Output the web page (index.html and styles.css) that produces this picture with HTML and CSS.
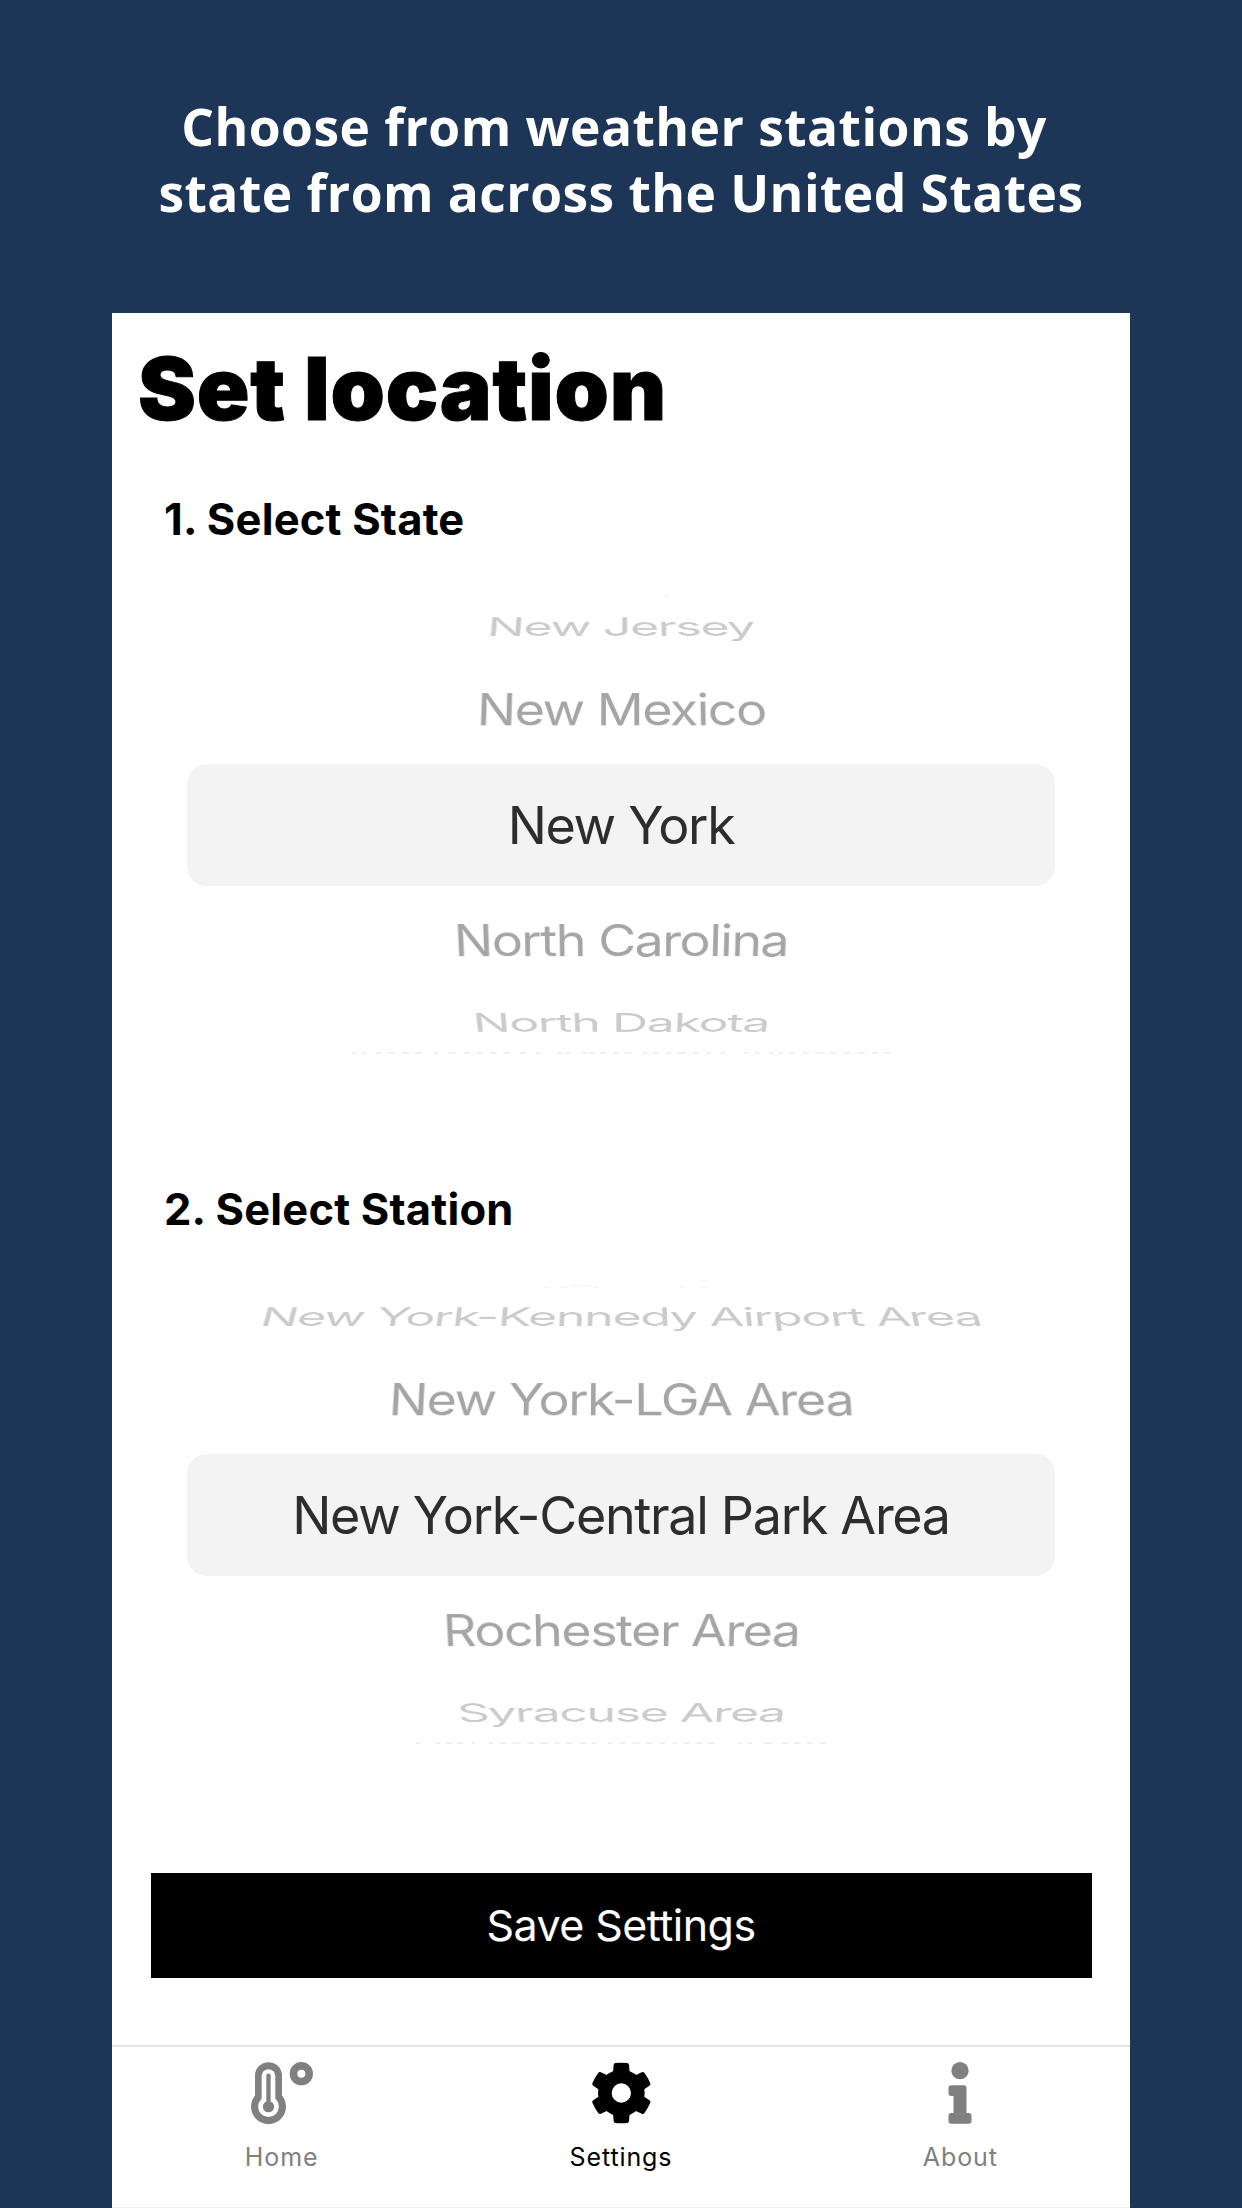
FILE: index.html
```html
<!DOCTYPE html>
<html lang="en">
<head>
<meta charset="utf-8">
<title>Set location</title>
<link rel="stylesheet" href="styles.css">
</head>
<body>
<header class="headline">
  <div class="headline-a">Choose from weather stations by</div>
  <div class="headline-b">state from across the United States</div>
</header>
<main class="screen">
  <h1 class="title">Set location</h1>
  <section class="group">
    <h2 class="label">1. Select State</h2>
    <div class="wheel">
      <svg class="edge" viewBox="0 0 868 4"><path class="faint" d="M478 1h3"/></svg>
      <div class="row far up"><span>New Jersey</span></div>
      <div class="row near up"><span>New Mexico</span></div>
      <div class="row current"><span>New York</span></div>
      <div class="row near down"><span>North Carolina</span></div>
      <div class="row far down"><span>North Dakota</span></div>
      <svg class="edge" viewBox="0 0 868 4"><path class="faint" transform="translate(158 0) scale(.354 1)" d="M20 2h14M47 2h14M88 2h16M122 2h20M160 2h22M198 2h20M251 2h12M292 2h22M336 2h18M372 2h18M410 2h18M448 2h20M493 2h18M538 2h16M600 2h16M624 2h14M671 2h14M690 2h14M720 2h18M758 2h16M790 2h20M842 2h12M869 2h18M907 2h16M941 2h22M982 2h18M1022 2h12M1059 2h16M1126 2h12M1159 2h12M1198 2h12M1226 2h12M1257 2h14M1292 2h18M1329 2h22M1371 2h18M1408 2h18M1447 2h22M1489 2h18M1524 2h18"/></svg>
    </div>
  </section>
  <section class="group">
    <h2 class="label">2. Select Station</h2>
    <div class="wheel">
      <svg class="edge" viewBox="0 0 868 4"><path class="faint top" d="M356 2h6M373 2h7M386 1h7M396 1h8M407 2h5M492 2h5M514 2h6"/></svg>
      <div class="row far up"><span>New York-Kennedy Airport Area</span></div>
      <div class="row near up"><span>New York-LGA Area</span></div>
      <div class="row current"><span>New York-Central Park Area</span></div>
      <div class="row near down"><span>Rochester Area</span></div>
      <div class="row far down"><span>Syracuse Area</span></div>
      <svg class="edge" viewBox="0 0 868 4"><path class="faint" transform="translate(223 0) scale(.333 1)" d="M18 2h14M78 2h12M108 2h18M141 2h20M184 2h12M237 2h12M270 2h20M308 2h24M353 2h20M392 2h22M433 2h16M469 2h20M511 2h20M546 2h14M593 2h16M629 2h18M667 2h24M709 2h20M750 2h16M787 2h16M824 2h16M859 2h20M894 2h22M986 2h12M1013 2h16M1064 2h24M1116 2h18M1152 2h18M1191 2h18M1232 2h18"/></svg>
    </div>
  </section>
  <button class="save">Save Settings</button>
  <nav class="tabs">
    <div class="tab">
      <svg class="icon" viewBox="90 63 192 192">
        <g fill="none" stroke-linecap="round">
          <path stroke="#808080" stroke-width="81" d="M145.500 107V200"/>
          <circle cx="145.500" cy="200" r="52.500" fill="#808080"/>
          <path stroke="#fff" stroke-width="41" d="M145.500 108V200"/>
          <circle cx="145.500" cy="200" r="31" fill="#fff"/>
          <path stroke="#808080" stroke-width="13" d="M145.500 107V200"/>
          <circle cx="145.500" cy="200" r="17" fill="#808080"/>
          <circle cx="244" cy="101" r="23.500" stroke="#808080" stroke-width="23"/>
        </g>
      </svg>
      <span>Home</span>
    </div>
    <div class="tab active">
      <svg class="icon" viewBox="102 63 192 192">
        <defs><path id="tooth" d="M173 110L176 75Q176 70 181 69Q199 67 217 69Q222 70 222 75L225 110Z"/></defs>
        <circle cx="199" cy="159" r="49.500" fill="none" stroke="#000" stroke-width="41"/>
        <use href="#tooth"/>
        <use href="#tooth" transform="rotate(60 199 159)"/>
        <use href="#tooth" transform="rotate(120 199 159)"/>
        <use href="#tooth" transform="rotate(180 199 159)"/>
        <use href="#tooth" transform="rotate(240 199 159)"/>
        <use href="#tooth" transform="rotate(300 199 159)"/>
      </svg>
      <span>Settings</span>
    </div>
    <div class="tab">
      <svg class="icon" viewBox="85.500 63 192 192">
        <g fill="#808080">
          <circle cx="181.500" cy="92" r="26"/>
          <path d="M155 136H193Q201 136 201 144V219H208Q216 219 216 227V243Q216 251 208 251H155Q147 251 147 243V227Q147 219 155 219H162V168H155Q147 168 147 160V144Q147 136 155 136Z"/>
        </g>
      </svg>
      <span>About</span>
    </div>
  </nav>
</main>
</body>
</html>
```
FILE: styles.css
```css
* { box-sizing: border-box; }
body {
  margin: 0;
  height: 2208px;
  overflow: hidden;
  background: #1d3557;
  font-family: Inter, "Liberation Sans", sans-serif;
  display: flex;
  flex-direction: column;
  align-items: center;
}
.headline {
  height: 313px;
  padding-top: 93px;
  color: #fff;
  font: 700 51.5px/66px "Open Sans", "Noto Sans", sans-serif;
  letter-spacing: 0.450px;
  text-align: center;
  white-space: nowrap;
}
.headline-a { padding-right: 14px; }
.screen {
  width: 1018px;
  height: 1895px;
  background: #fff;
  display: flex;
  flex-direction: column;
}
.title {
  margin: 26px 0 0 26px;
  font-size: 87px;
  line-height: 100px;
  font-weight: 900;
  letter-spacing: 0.800px;
  -webkit-text-stroke: 1px #000;
  white-space: nowrap;
}
.group { height: 690px; padding-top: 55px; }
.label {
  margin: 0 0 51px 52px;
  font-size: 43.5px;
  line-height: 50px;
  font-weight: 680;
  letter-spacing: 0.200px;
}
.wheel {
  width: 868px;
  margin: 0 auto;
  font-size: 52px;
  letter-spacing: -1.400px;
}
.edge { display: block; width: 868px; height: 4px; }
.faint { stroke: #f0f0f0; stroke-width: 2; }
.faint.top { stroke: #f7f7f7; }
.row {
  display: flex;
  align-items: center;
  justify-content: center;
  white-space: nowrap;
}
.row span { line-height: 60px; }
.current {
  height: 122px;
  padding-top: 1px;
  border-radius: 20px;
  background: #f3f3f3;
  color: #2d2d2d;
  letter-spacing: -1.300px;
}
.near { height: 109.500px; padding-top: 1px; color: #a5a5a5; letter-spacing: -1.500px; }
.far { height: 55.500px; color: #cbcbcb; }
.near.up span { transform: perspective(2300px) rotateX(32deg); }
.near.down span { transform: perspective(2300px) rotateX(-32deg); }
.far.up span { transform: perspective(2300px) rotateX(61deg) scaleX(0.962); }
.far.down span { transform: perspective(2300px) rotateX(-61deg) scaleX(0.962); }
.save {
  width: 941px;
  height: 105px;
  margin: auto auto 67px;
  padding: 0 0 1px;
  border: 0;
  background: #000;
  color: #fff;
  font: 400 43px/50px Inter, sans-serif;
  letter-spacing: -0.550px;
}
.tabs {
  height: 163px;
  border-top: 2px solid #e4e4e4;
  border-bottom: 1px solid #f0f0f0;
  display: grid;
  grid-template-columns: repeat(3, 1fr);
  color: #808080;
  font-size: 25px;
}
.tab {
  display: flex;
  flex-direction: column;
  align-items: center;
  padding-top: 14px;
}
.tab span { margin-top: 17px; line-height: 30px; letter-spacing: 0.900px; }
.active { color: #000; }
.icon { width: 64px; height: 64px; display: block; }
```
